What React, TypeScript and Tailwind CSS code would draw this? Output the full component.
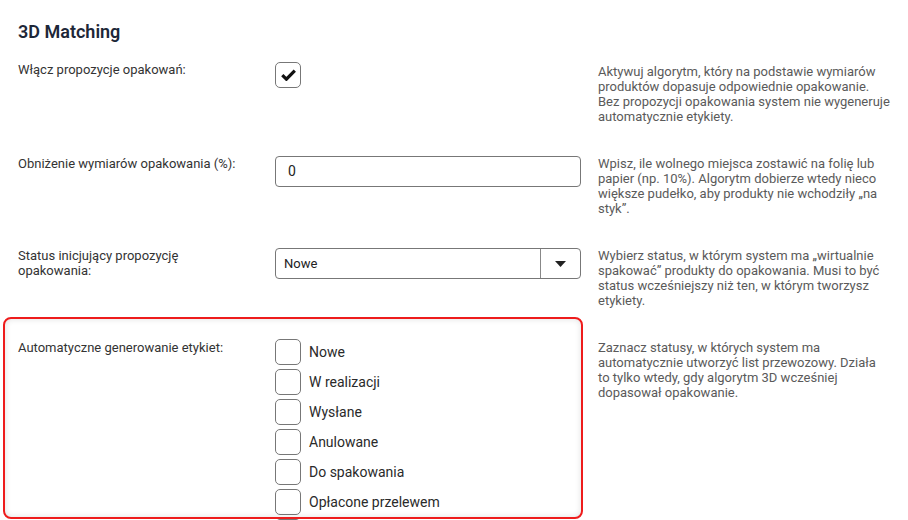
const statuses = [
  "Nowe",
  "W realizacji",
  "Wysłane",
  "Anulowane",
  "Do spakowania",
  "Opłacone przelewem",
];

const Row = ({
  label,
  lines,
  children,
  descClass = "",
}: {
  label: string;
  lines: string[];
  children: React.ReactNode;
  descClass?: string;
}) => (
  <div className="flex items-start">
    <div className="w-[257px] pr-[30px] text-[13px] leading-[15px] text-[#333]">{label}</div>
    <div className="w-[306px]">{children}</div>
    <p className={`ml-[17px] w-[300px] text-[13px] leading-[15px] text-[#5a5a5a] ${descClass}`}>
      {lines.map((l) => (
        <span key={l} className="block whitespace-nowrap">
          {l}
        </span>
      ))}
    </p>
  </div>
);

export default function App() {
  return (
    <div
      className="h-[520px] w-[908px] overflow-hidden bg-white pl-[18px] pt-[20px]"
      style={{ fontFamily: "Roboto, 'Liberation Sans', sans-serif" }}
    >
      <h1 className="text-[18px] font-semibold leading-[24px] text-[#1d2738]">3D Matching</h1>

      <div className="mt-[18px] flex flex-col gap-8">
        {/* Włącz propozycje */}
        <Row
          label="Włącz propozycje opakowań:"
          lines={[
            "Aktywuj algorytm, który na podstawie wymiarów",
            "produktów dopasuje odpowiednie opakowanie.",
            "Bez propozycji opakowania system nie wygeneruje",
            "automatycznie etykiety.",
          ]}
          descClass="mt-[2px]"
        >
          <button className="flex h-[26px] w-[26px] items-center justify-center rounded-[5px] border border-[#777] bg-white">
            <svg width="15" height="12" viewBox="0 0 15 12">
              <path d="M1.3 6.2 L5.4 10.2 L13.8 1.6" fill="none" stroke="#111" strokeWidth="3.2" />
            </svg>
          </button>
        </Row>

        {/* Obniżenie wymiarów */}
        <Row
          label="Obniżenie wymiarów opakowania (%):"
          lines={[
            "Wpisz, ile wolnego miejsca zostawić na folię lub",
            "papier (np. 10%). Algorytm dobierze wtedy nieco",
            "większe pudełko, aby produkty nie wchodziły „na",
            "styk”.",
          ]}
        >
          <div className="flex h-[31px] items-center rounded-[4px] border border-[#777] px-[12px] text-[14px] text-[#222]">
            0
          </div>
        </Row>

        {/* Status inicjujący */}
        <Row
          label="Status inicjujący propozycję opakowania:"
          lines={[
            "Wybierz status, w którym system ma „wirtualnie",
            "spakować” produkty do opakowania. Musi to być",
            "status wcześniejszy niż ten, w którym tworzysz",
            "etykiety.",
          ]}
        >
          <div className="flex h-[31px] items-stretch rounded-[4px] border border-[#777] text-[13px] text-[#222]">
            <div className="flex flex-1 items-center pl-[8px]">Nowe</div>
            <div className="flex w-[40px] items-center justify-center border-l border-[#888]">
              <svg width="11" height="6" viewBox="0 0 11 6">
                <path d="M0 0 H11 L5.5 6 Z" fill="#222" />
              </svg>
            </div>
          </div>
        </Row>

        {/* Automatyczne generowanie */}
        <div className="relative">
          <div className="pointer-events-none absolute -left-[15px] -top-[23px] z-10 h-[202px] w-[580px] rounded-[8px] border-2 border-[#ee1c1c] shadow-[inset_0_0_6px_rgba(0,0,0,0.12)]" />
          <Row
            label="Automatyczne generowanie etykiet:"
            lines={[
              "Zaznacz statusy, w których system ma",
              "automatycznie utworzyć list przewozowy. Działa",
              "to tylko wtedy, gdy algorytm 3D wcześniej",
              "dopasował opakowanie.",
            ]}
          >
            <div className="-mt-[1px] flex flex-col gap-[4px]">
              {statuses.map((s) => (
                <label key={s} className="flex items-center gap-[8px]">
                  <span className="h-[26px] w-[26px] rounded-[5px] border border-[#777] bg-white" />
                  <span className="text-[14px] text-[#2a2a2a]">{s}</span>
                </label>
              ))}
              <span className="h-[26px] w-[26px] rounded-[5px] border border-[#777] bg-white" />
            </div>
          </Row>
        </div>
      </div>
    </div>
  );
}
